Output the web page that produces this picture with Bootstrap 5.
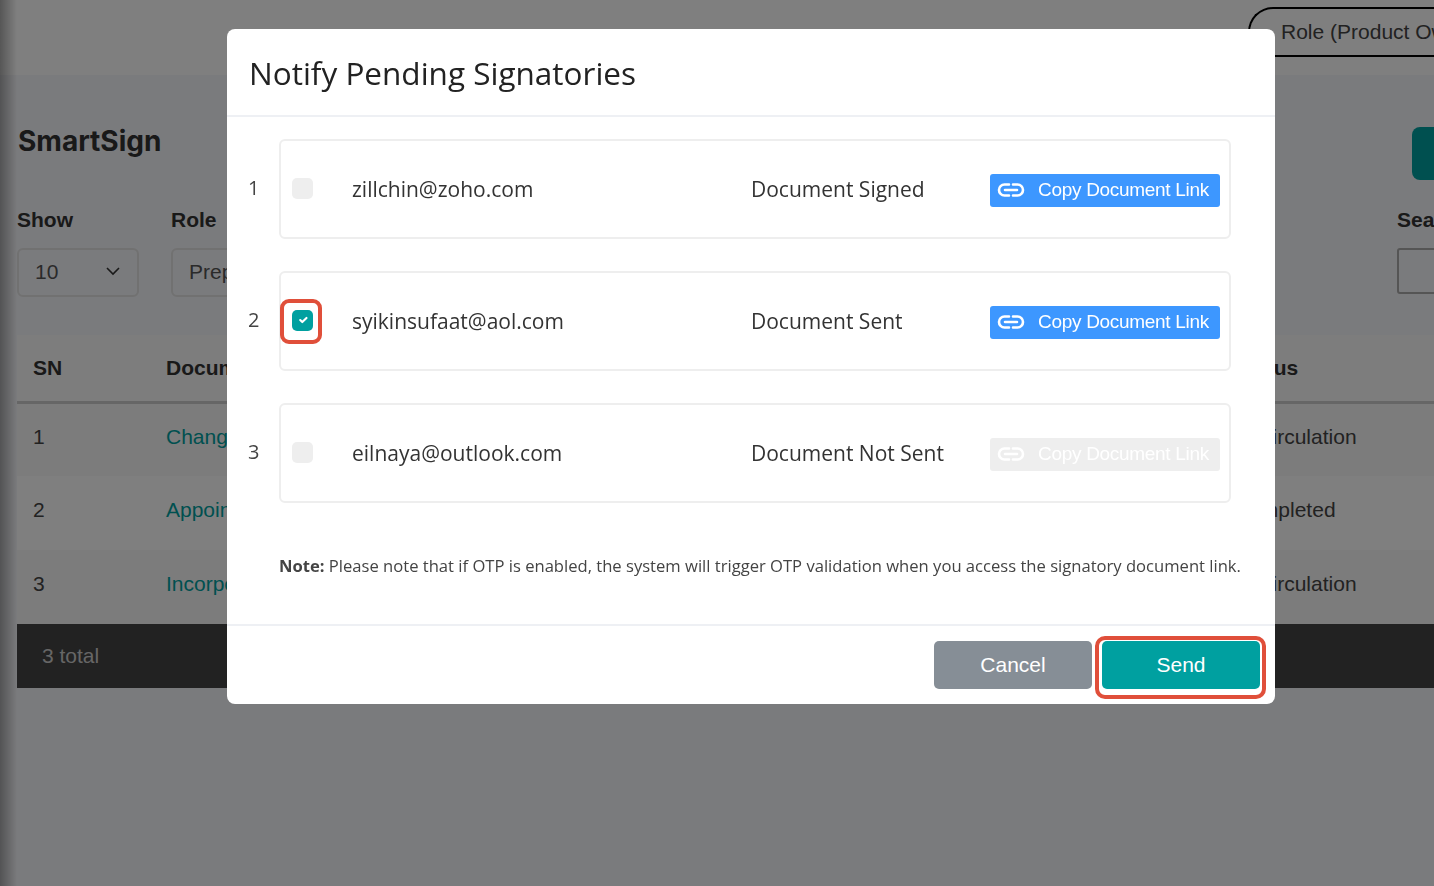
<!DOCTYPE html>
<html lang="en">
<head>
    <meta charset="UTF-8">
    <meta name="viewport" content="width=device-width, initial-scale=1.0">
    <title>Notify Pending Signatories</title>
    <link href="https://cdn.jsdelivr.net/npm/bootstrap@5.3.0/dist/css/bootstrap.min.css" rel="stylesheet">
    <style>
        body { font-family: "Liberation Sans", sans-serif; color: #333; background: #f5f6fa; overflow: hidden; height: 886px; }
        .page-wrap { display: flex; width: 1700px; height: 886px; }
        .side-shade { width: 17px; flex-shrink: 0; position: relative; z-index: 1; background: linear-gradient(to right, rgba(0,0,0,.32), rgba(0,0,0,0)); }
        .page-main { flex: 1; }
        .top-strip { height: 75px; background: #fff; margin-left: -17px; padding: 7px 0 0 1248px; }
        .role-pill { width: 400px; height: 50px; border: 2px solid #000; border-right: 0; border-radius: 26px 0 0 26px; font-size: 21px; line-height: 45px; padding-left: 31px; color: #444; }
        .title-row { height: 105px; padding-top: 52px; width: 1495px; }
        .app-title { font-family: Inter, sans-serif; font-size: 28px; font-weight: 700; line-height: 28px; margin: 0; padding-left: 1px; color: #333; }
        .teal-block { width: 100px; height: 53px; margin-left: auto; background: #00a0a0; border-radius: 8px; }
        .filters { display: flex; width: 1700px; margin-top: 28px; }
        .filter-label { font-size: 21px; font-weight: 700; line-height: 24px; margin-bottom: 16px; color: #333; }
        .filter-box { height: 49px; border: 2px solid #e2e2e2; border-radius: 6px; font-size: 21px; line-height: 45px; padding: 0 17px 2px 16px; color: #555; display: flex; align-items: center; justify-content: space-between; }
        .filter-show { width: 122px; margin-right: 32px; flex-shrink: 0; }
        .filter-role { width: 1226px; flex-shrink: 0; }
        .filter-role .filter-box { width: 300px; }
        .filter-search { width: 200px; flex-shrink: 0; }
        .filter-search .filter-box { height: 46px; border-color: #aaa; border-radius: 3px; }
        .list-table { width: 1700px; table-layout: fixed; margin: 38px 0 0; border-collapse: collapse; font-size: 21px; }
        .list-table th { height: 67px; background: #fafafa; border-bottom: 3px solid #ccc; font-weight: 700; vertical-align: middle; color: #333; padding: 0 0 0 16px; }
        .list-table td { height: 74px; vertical-align: middle; padding: 0 0 6px 16px; color: #444; background: #f8f8f8; }
        .list-table tr.alt td { background: #fff; }
        .list-table a { color: #00a0a0; text-decoration: none; }
        .list-table td.total-cell { height: 64px; background: #444; color: #ccc; padding: 0 0 0 25px; }
        .col-sn { width: 133px; }
        .col-doc { width: 1068px; }

        .notify-dialog { max-width: 1048px; width: 1048px; margin: 29px 0 0 227px; font-family: "Open Sans", sans-serif; }
        .notify-dialog .modal-content { border: 0; border-radius: 8px; height: 675px; }
        .notify-dialog .modal-header { height: 88px; padding: 0 22px; border-bottom: 2px solid #eef0f4; }
        .notify-dialog .modal-title { font-size: 31.5px; font-weight: 400; color: #222; margin-top: 1px; }
        .notify-dialog .modal-body { padding: 22px 45px 0 20px; }
        .sign-row { display: flex; align-items: center; margin-bottom: 32px; }
        .sign-no { width: 32px; flex-shrink: 0; font-size: 20px; color: #444; padding-left: 1px; margin-top: -2px; }
        .sign-card { flex: 1; height: 100px; border: 2px solid #eee; border-radius: 6px; display: flex; align-items: center; padding: 2px 9px 0 10px; font-size: 21px; color: #333; }
        .sign-check { width: 21px; height: 21px; position: relative; flex-shrink: 0; display: flex; margin: -4px 0 0 1px; }
        .sign-check .form-check-input { width: 21px; height: 21px; margin: 0; border: 0; border-radius: 5px; background-color: #eee; opacity: 1; background-size: 14px; }
        .sign-check .form-check-input:checked { background-color: #00a0a0; }
        .sign-check.marked::after { content: ""; position: absolute; left: -12px; top: -11px; width: 42px; height: 45px; border: 4px solid #e04f3a; border-radius: 9px; }
        .sign-email { width: 399px; margin-left: 39px; }
        .sign-status { width: 239px; }
        .btn-copy { width: 230px; height: 33px; padding: 0 0 0 7px; display: flex; align-items: center; gap: 13px; background: #3d97ff; border: 0; border-radius: 3px; color: #fff; font-family: "Liberation Sans", sans-serif; font-size: 19px; letter-spacing: -.3px; white-space: nowrap; }
        .btn-copy:disabled { background: #eee; color: #fff; opacity: 1; }
        .note-line { font-size: 16.6px; color: #444; margin: 51px -20px 0 32px; white-space: nowrap; }
        .notify-dialog .modal-footer { position: absolute; left: 0; right: 0; top: 595px; height: 80px; padding: 0 15px 0 0; border-top: 2px solid #eef0f4; gap: 10px; }
        .notify-dialog .modal-footer .btn { width: 158px; height: 48px; margin: 0; font-family: "Liberation Sans", sans-serif; font-size: 21px; border: 0; border-radius: 5px; color: #fff; }
        .btn-cancel { background: #868e96; }
        .notify-dialog .modal-footer .btn-send { background: #00a0a0; position: relative; }
        .btn-send::after { content: ""; position: absolute; left: -7px; right: -6px; top: -5px; bottom: -10px; border: 4px solid #e04f3a; border-radius: 10px; }
    </style>
</head>
<body>
    <!-- Page behind the modal -->
    <div class="page-wrap">
        <div class="side-shade"></div>
        <div class="page-main">
            <div class="top-strip">
                <div class="role-pill">Role (Product Owner)</div>
            </div>
            <div class="title-row d-flex">
                <h1 class="app-title">SmartSign</h1>
                <div class="teal-block"></div>
            </div>
            <div class="filters">
                <div class="filter-show">
                    <div class="filter-label">Show</div>
                    <div class="filter-box">10
                        <svg width="14" height="9" viewBox="0 0 14 9" fill="none" stroke="#333" stroke-width="1.6"><path d="M1 1l6 6 6-6"/></svg>
                    </div>
                </div>
                <div class="filter-role">
                    <div class="filter-label">Role</div>
                    <div class="filter-box">Preparer</div>
                </div>
                <div class="filter-search">
                    <div class="filter-label">Search</div>
                    <div class="filter-box"></div>
                </div>
            </div>
            <table class="list-table">
                <colgroup><col class="col-sn"><col class="col-doc"><col></colgroup>
                <thead>
                    <tr><th>SN</th><th>Document</th><th>Status</th></tr>
                </thead>
                <tbody>
                    <tr><td>1</td><td><a href="#">Change of Director</a></td><td>In Circulation</td></tr>
                    <tr class="alt"><td>2</td><td><a href="#">Appointment Letter</a></td><td>Completed</td></tr>
                    <tr><td>3</td><td><a href="#">Incorporation Form</a></td><td>In Circulation</td></tr>
                    <tr><td class="total-cell" colspan="3">3 total</td></tr>
                </tbody>
            </table>
        </div>
    </div>

    <div class="modal-backdrop fade show"></div>

    <!-- Notify modal -->
    <div class="modal d-block" tabindex="-1">
        <div class="modal-dialog notify-dialog">
            <div class="modal-content">
                <div class="modal-header">
                    <h5 class="modal-title">Notify Pending Signatories</h5>
                </div>
                <div class="modal-body">
                    <div class="sign-row">
                        <div class="sign-no">1</div>
                        <div class="sign-card">
                            <div class="sign-check"><input class="form-check-input" type="checkbox" disabled></div>
                            <div class="sign-email">zillchin@zoho.com</div>
                            <div class="sign-status">Document Signed</div>
                            <button class="btn-copy" type="button">
                                <svg width="28" height="14" viewBox="0 0 28 14" fill="none" stroke="#fff" stroke-width="2.6" stroke-linecap="round"><path d="M12 1.5H7.5a5.5 5.5 0 0 0 0 11H12M16 1.5h4.5a5.5 5.5 0 0 1 0 11H16M8 7h12"/></svg>
                                Copy Document Link
                            </button>
                        </div>
                    </div>
                    <div class="sign-row">
                        <div class="sign-no">2</div>
                        <div class="sign-card">
                            <div class="sign-check marked"><input class="form-check-input" type="checkbox" checked></div>
                            <div class="sign-email">syikinsufaat@aol.com</div>
                            <div class="sign-status">Document Sent</div>
                            <button class="btn-copy" type="button">
                                <svg width="28" height="14" viewBox="0 0 28 14" fill="none" stroke="#fff" stroke-width="2.6" stroke-linecap="round"><path d="M12 1.5H7.5a5.5 5.5 0 0 0 0 11H12M16 1.5h4.5a5.5 5.5 0 0 1 0 11H16M8 7h12"/></svg>
                                Copy Document Link
                            </button>
                        </div>
                    </div>
                    <div class="sign-row">
                        <div class="sign-no">3</div>
                        <div class="sign-card">
                            <div class="sign-check"><input class="form-check-input" type="checkbox" disabled></div>
                            <div class="sign-email">eilnaya@outlook.com</div>
                            <div class="sign-status">Document Not Sent</div>
                            <button class="btn-copy" type="button" disabled>
                                <svg width="28" height="14" viewBox="0 0 28 14" fill="none" stroke="#fff" stroke-width="2.6" stroke-linecap="round"><path d="M12 1.5H7.5a5.5 5.5 0 0 0 0 11H12M16 1.5h4.5a5.5 5.5 0 0 1 0 11H16M8 7h12"/></svg>
                                Copy Document Link
                            </button>
                        </div>
                    </div>
                    <p class="note-line"><b>Note:</b> Please note that if OTP is enabled, the system will trigger OTP validation when you access the signatory document link.</p>
                </div>
                <div class="modal-footer">
                    <button type="button" class="btn btn-cancel">Cancel</button>
                    <button type="button" class="btn btn-send">Send</button>
                </div>
            </div>
        </div>
    </div>

    <script src="https://cdn.jsdelivr.net/npm/bootstrap@5.3.0/dist/js/bootstrap.bundle.min.js"></script>
</body>
</html>
